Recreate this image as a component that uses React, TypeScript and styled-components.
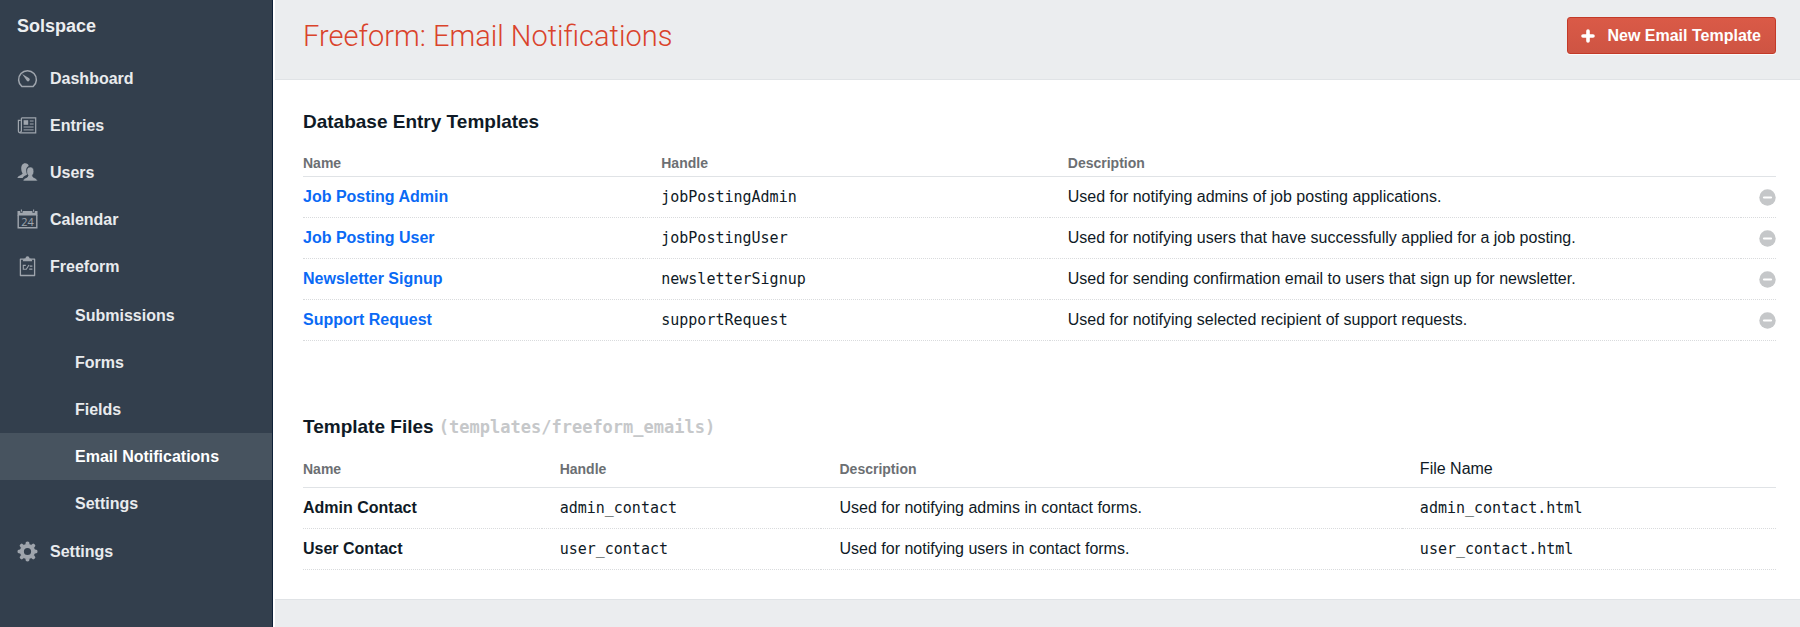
import React from "react";
import styled, { createGlobalStyle, css } from "styled-components";

const sans = `"Liberation Sans", Arial, Helvetica, sans-serif`;
const mono = `"DejaVu Sans Mono", Menlo, monospace`;

const color = {
  nav: "#333f4d",
  navActive: "#47535f",
  navEdge: "#0f2138",
  page: "#ebedef",
  line: "#e0e3e6",
  ink: "#0f1a26",
  link: "#0a6af5",
  muted: "#6c6f73",
};

const GlobalStyle = createGlobalStyle`
  *, *::before, *::after { box-sizing: border-box; }
  body {
    margin: 0;
    font-family: ${sans};
    font-size: 16px;
    line-height: 20px;
    color: ${color.ink};
    background: ${color.page};
  }
`;

const Shell = styled.div`
  display: flex;
  min-height: 100vh;
`;

const Sidebar = styled.aside`
  flex: 0 0 273px;
  background: ${color.nav};
  border-right: 1px solid ${color.navEdge};
`;

const Brand = styled.a`
  display: block;
  padding: 16px 17px 19px;
  font-size: 18px;
  font-weight: bold;
  color: #eceef0;
  text-decoration: none;
`;

const NavList = styled.ul`
  list-style: none;
  margin: 0;
  padding: 0;
`;

const SubList = styled(NavList)`
  margin: 2px 0 1px;
`;

const NavLink = styled.a<{ $sub?: boolean; $active?: boolean }>`
  display: flex;
  align-items: center;
  gap: 12px;
  height: 47px;
  padding: 0 17px;
  font-weight: bold;
  color: #e9ebed;
  text-decoration: none;
  ${(p) => p.$sub && css`padding-left: 75px;`}
  ${(p) =>
    p.$active &&
    css`
      color: #fff;
      background: ${color.navActive};
    `}
`;

const NavIcon = styled.svg`
  flex: none;
  width: 21px;
  height: 21px;
  color: #9fa5ad;
`;

const Main = styled.main`
  flex: 1;
  min-width: 0;
  border-left: 2px solid #fff;
`;

const PageHeader = styled.header`
  display: flex;
  align-items: flex-start;
  justify-content: space-between;
  padding: 17px 24px 24px 28px;
`;

const Title = styled.h1`
  margin: 0;
  font-family: Roboto, ${sans};
  font-size: 29px;
  font-weight: 300;
  line-height: 38px;
  color: #da432b;
`;

const PrimaryButton = styled.button`
  display: flex;
  align-items: center;
  gap: 12px;
  height: 37px;
  padding: 0 14px 0 13px;
  border: 1px solid #c33a28;
  border-radius: 3px;
  background: linear-gradient(#da5a47, #ce5443);
  box-shadow: 0 1px 0 #fafafa;
  font: bold 16px/20px ${sans};
  color: #fff;
`;

const Panel = styled.div`
  padding: 30px 24px 29px 28px;
  background: #fff;
  border-top: 1px solid ${color.line};
  border-bottom: 1px solid ${color.line};
`;

const Section = styled.section`
  & + & {
    margin-top: 74px;
  }
`;

const SectionTitle = styled.h2`
  margin: 0;
  font-size: 19px;
  line-height: 24px;
`;

const PathHint = styled.code`
  font-family: ${mono};
  font-size: 17px;
  color: #c6c8ca;
`;

const Table = styled.table`
  width: 100%;
  margin-top: 12px;
  table-layout: fixed;
  border-spacing: 0;
`;

const Th = styled.th<{ $width?: string; $plain?: boolean; $low?: boolean }>`
  width: ${(p) => p.$width ?? "auto"};
  height: 37px;
  padding: 0 0 0 18px;
  text-align: left;
  font-size: 14px;
  color: ${color.muted};
  border-bottom: 1px solid ${color.line};
  &:first-child {
    padding-left: 0;
  }
  ${(p) =>
    p.$plain &&
    css`
      font-size: 16px;
      font-weight: normal;
      color: ${color.ink};
    `}
  ${(p) =>
    p.$low &&
    css`
      height: 31px;
      padding-bottom: 3px;
      vertical-align: bottom;
    `}
`;

const Td = styled.td<{ $mono?: boolean }>`
  height: 41px;
  padding: 0 0 1px 18px;
  border-bottom: 1px dotted #d9dbdd;
  ${(p) =>
    p.$mono &&
    css`
      font-family: ${mono};
      font-size: 15px;
    `}
`;

const NameCell = styled.th`
  padding: 0;
  text-align: left;
  border-bottom: 1px dotted #d9dbdd;
`;

const NameLink = styled.a`
  color: ${color.link};
  text-decoration: none;
`;

const ActionCell = styled(Td)`
  padding: 0;
  text-align: right;
`;

const RemoveButton = styled.button`
  display: inline-flex;
  padding: 0;
  border: 0;
  background: none;
  vertical-align: middle;
`;

const GaugeIcon = () => (
  <NavIcon viewBox="0 0 21 21" fill="none" stroke="currentColor" aria-hidden>
    <path d="M4.8 18.4a8.900 8.900 0 1 1 11.400 0z" strokeWidth="1.500" strokeLinejoin="round" />
    <path d="M5.200 6 12.200 10.300a1.700 1.700 0 0 1-2.400 2.500z" fill="currentColor" stroke="none" />
  </NavIcon>
);

const NewsIcon = () => (
  <NavIcon viewBox="0 0 21 21" fill="none" stroke="currentColor" aria-hidden>
    <path d="M4.400 2.900h14.300v14.900H3.200a1.800 1.800 0 0 1-1.800-1.800V5.400h2.300" strokeWidth="1.200" />
    <path d="M4.400 2.900v12.600a1.400 1.400 0 0 1-1.500 1.600" strokeWidth="1.200" />
    <path d="M6.600 5.200h4.600v4.600H6.600z" fill="currentColor" stroke="none" />
    <path d="M12.800 6h3.800M12.800 9h3.800M6.600 12h10M6.600 14.900h10" />
  </NavIcon>
);

const UsersIcon = () => (
  <NavIcon viewBox="0 0 21 21" fill="currentColor" aria-hidden>
    <path d="M8.2 1.2c2 0 3.2 1 3.5 2.7-1.7.8-2.6 2.4-2.5 4.7.1 1.3.5 2.3 1.2 3.2-.1 1.5-3.7 2-4.7 4.300H.5c0-3 4.800-2.600 5.100-4.900C4.800 10.300 4.400 9 4.300 7.500 4 3.300 5.600 1.200 8.200 1.200z" />
    <path d="M13.300 5c2.500 0 3.600 1.700 3.500 4.600 0 1.700-.6 2.900-1.400 3.800.2 3 4.900 2.100 5.100 5.600H6c.2-3.500 4.900-2.600 5.100-5.600-.8-.9-1.400-2.100-1.400-3.800C9.600 6.700 10.800 5 13.300 5z" stroke="#333f4d" strokeWidth=".6" />
  </NavIcon>
);

const CalendarIcon = () => (
  <NavIcon viewBox="0 0 21 21" aria-hidden>
    <path d="M1.200 6V18.700h18.600V6" fill="none" stroke="currentColor" strokeWidth="1.400" />
    <path d="M.5 2h2.700v1.800h2.400V2h9.800v1.800h2.400V2h2.700v4.600H.5z" fill="currentColor" />
    <path d="M4.400.6v2.200M16.600.6v2.200" stroke="currentColor" strokeWidth="1.100" />
    <text
      x="10.500"
      y="16.500"
      textAnchor="middle"
      fontSize="11"
      fontWeight="400"
      fontFamily="Open Sans, sans-serif"
      fill="currentColor"
    >
      24
    </text>
  </NavIcon>
);

const ClipboardIcon = () => (
  <NavIcon viewBox="0 0 21 21" fill="none" stroke="currentColor" aria-hidden>
    <path d="M3.400 3.200h14.200v16.300H3.400z" strokeWidth="1.300" strokeLinejoin="round" />
    <path d="M5.800 5.200c0-1.700 1-2.600 2.700-2.700C8.600 1 9.300.2 10.500.2s1.900.8 2 2.300c1.700.1 2.700 1 2.700 2.700z" fill="currentColor" stroke="none" />
    <path d="M8.800 9.400H6.300v3.800h3L12 9M12.800 10.100h2.600M12.200 13.100h3.200" strokeWidth="1.100" />
  </NavIcon>
);

const teeth = [0, 45, 90, 135, 180, 225, 270, 315];

const GearIcon = () => (
  <NavIcon viewBox="0 0 21 21" aria-hidden>
    <circle cx="10.500" cy="10.500" r="5.600" fill="none" stroke="currentColor" strokeWidth="4" />
    {teeth.map((angle) => (
      <path
        key={angle}
        d="M8.300 3.800 8.900.9q1.600-.9 3.200 0l.6 2.900z"
        fill="currentColor"
        transform={`rotate(${angle} 10.500 10.500)`}
      />
    ))}
  </NavIcon>
);

const PlusIcon = () => (
  <svg width="14" height="14" viewBox="0 0 14 14" aria-hidden>
    <path d="M7 2v10M2 7h10" stroke="#fff" strokeWidth="3.600" strokeLinecap="round" />
  </svg>
);

const MinusIcon = () => (
  <svg width="17" height="17" viewBox="0 0 17 17" aria-hidden>
    <circle cx="8.500" cy="8.500" r="8.200" fill="#c5c7c9" />
    <path d="M5 8.500h7" stroke="#fff" strokeWidth="2.200" strokeLinecap="round" />
  </svg>
);

type Item = { label: string; icon: React.FC; children?: string[] };

const navigation: Item[] = [
  { label: "Dashboard", icon: GaugeIcon },
  { label: "Entries", icon: NewsIcon },
  { label: "Users", icon: UsersIcon },
  { label: "Calendar", icon: CalendarIcon },
  {
    label: "Freeform",
    icon: ClipboardIcon,
    children: ["Submissions", "Forms", "Fields", "Email Notifications", "Settings"],
  },
  { label: "Settings", icon: GearIcon },
];

const databaseTemplates = [
  ["Job Posting Admin", "jobPostingAdmin", "Used for notifying admins of job posting applications."],
  ["Job Posting User", "jobPostingUser", "Used for notifying users that have successfully applied for a job posting."],
  ["Newsletter Signup", "newsletterSignup", "Used for sending confirmation email to users that sign up for newsletter."],
  ["Support Request", "supportRequest", "Used for notifying selected recipient of support requests."],
];

const fileTemplates = [
  ["Admin Contact", "admin_contact", "Used for notifying admins in contact forms."],
  ["User Contact", "user_contact", "Used for notifying users in contact forms."],
];

export default function App() {
  const active = "Email Notifications";
  return (
    <>
      <GlobalStyle />
      <Shell>
        <Sidebar>
          <Brand href="#">Solspace</Brand>
          <nav>
            <NavList>
              {navigation.map(({ label, icon: Icon, children }) => (
                <li key={label}>
                  <NavLink href="#">
                    <Icon />
                    {label}
                  </NavLink>
                  {children && (
                    <SubList>
                      {children.map((child) => (
                        <li key={child}>
                          <NavLink href="#" $sub $active={child === active}>
                            {child}
                          </NavLink>
                        </li>
                      ))}
                    </SubList>
                  )}
                </li>
              ))}
            </NavList>
          </nav>
        </Sidebar>

        <Main>
          <PageHeader>
            <Title>Freeform: Email Notifications</Title>
            <PrimaryButton type="button">
              <PlusIcon />
              New Email Template
            </PrimaryButton>
          </PageHeader>

          <Panel>
            <Section>
              <SectionTitle>Database Entry Templates</SectionTitle>
              <Table>
                <thead>
                  <tr>
                    <Th $low $width="23.1%">Name</Th>
                    <Th $low $width="27.6%">Handle</Th>
                    <Th $low>Description</Th>
                    <Th $low $width="35px" aria-label="Actions" />
                  </tr>
                </thead>
                <tbody>
                  {databaseTemplates.map(([name, handle, description]) => (
                    <tr key={handle}>
                      <NameCell scope="row">
                        <NameLink href="#">{name}</NameLink>
                      </NameCell>
                      <Td $mono>{handle}</Td>
                      <Td>{description}</Td>
                      <ActionCell>
                        <RemoveButton type="button" aria-label={`Delete ${name}`}>
                          <MinusIcon />
                        </RemoveButton>
                      </ActionCell>
                    </tr>
                  ))}
                </tbody>
              </Table>
            </Section>

            <Section>
              <SectionTitle>
                Template Files <PathHint>(templates/freeform_emails)</PathHint>
              </SectionTitle>
              <Table>
                <thead>
                  <tr>
                    <Th $width="16.2%">Name</Th>
                    <Th $width="19%">Handle</Th>
                    <Th>Description</Th>
                    <Th $width="25.4%" $plain>
                      File Name
                    </Th>
                  </tr>
                </thead>
                <tbody>
                  {fileTemplates.map(([name, handle, description]) => (
                    <tr key={handle}>
                      <NameCell scope="row">{name}</NameCell>
                      <Td $mono>{handle}</Td>
                      <Td>{description}</Td>
                      <Td $mono>{handle}.html</Td>
                    </tr>
                  ))}
                </tbody>
              </Table>
            </Section>
          </Panel>
        </Main>
      </Shell>
    </>
  );
}
